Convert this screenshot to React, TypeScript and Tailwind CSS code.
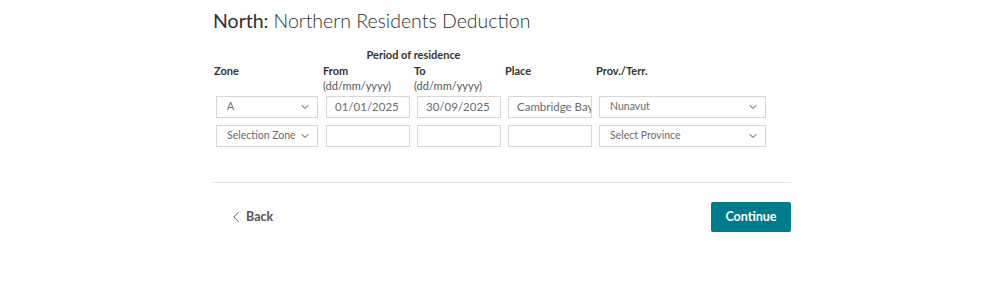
import { ChevronDown, ChevronLeft } from "lucide-react";

function Select({ value, className }: { value: string; className: string }) {
  return (
    <div
      className={`flex items-center justify-between gap-[3px] h-[22px] border border-[#d6d6d6] bg-white pl-[10px] pr-[6px] text-[10.5px] text-[#6b6b6b] ${className}`}
    >
      <span className="whitespace-nowrap">{value}</span>
      <ChevronDown size={12} strokeWidth={2} className="text-[#444] shrink-0" />
    </div>
  );
}

function Field({ value, className }: { value?: string; className: string }) {
  return (
    <div
      className={`flex items-center h-[22px] border border-[#d6d6d6] bg-white pl-[8px] pr-[4px] text-[11.5px] text-[#6b6b6b] overflow-hidden whitespace-nowrap ${className}`}
    >
      {value}
    </div>
  );
}

export default function App() {
  return (
    <div className="w-[999px] h-[299px] bg-white font-['Lato',sans-serif] text-[#333]">
      <div className="ml-[213px] w-[578px] pt-[8px]">
        <h1 className="text-[19.5px] leading-[26px] text-[#2f2f2f]">
          <span className="font-normal">North:</span> <span className="font-light">Northern Residents Deduction</span>
        </h1>

        <div className="mt-[14px] grid grid-cols-[110px_91px_91px_91px_170px] text-[11px]">
          <div />
          <div className="col-span-2 text-center font-bold leading-[14px] pr-[1px]">Period of residence</div>
          <div />
          <div />

          <div className="pl-[1px] font-bold leading-[15px] pt-[1px]">Zone</div>
          <div className="font-bold leading-[15px] pt-[1px]">
            From
            <div className="font-normal text-[#555] leading-[15px]">(dd/mm/yyyy)</div>
          </div>
          <div className="font-bold leading-[15px] pt-[1px]">
            To
            <div className="font-normal text-[#555] leading-[15px]">(dd/mm/yyyy)</div>
          </div>
          <div className="font-bold leading-[15px] pt-[1px]">Place</div>
          <div className="font-bold leading-[15px] pt-[1px]">Prov./Terr.</div>

          <div className="pt-[3px] pl-[3px]"><Select value="A" className="w-[102px]" /></div>
          <div className="pt-[3px] pl-[3px]"><Field value="01/01/2025" className="w-[84px]" /></div>
          <div className="pt-[3px] pl-[3px]"><Field value="30/09/2025" className="w-[84px]" /></div>
          <div className="pt-[3px] pl-[3px]"><Field value="Cambridge Bay" className="w-[84px]" /></div>
          <div className="pt-[3px] pl-[3px]"><Select value="Nunavut" className="w-[167px]" /></div>

          <div className="pt-[7px] pl-[3px]"><Select value="Selection Zone" className="w-[102px]" /></div>
          <div className="pt-[7px] pl-[3px]"><Field className="w-[84px]" /></div>
          <div className="pt-[7px] pl-[3px]"><Field className="w-[84px]" /></div>
          <div className="pt-[7px] pl-[3px]"><Field className="w-[84px]" /></div>
          <div className="pt-[7px] pl-[3px]"><Select value="Select Province" className="w-[167px]" /></div>
        </div>

        <div className="mt-[35px] border-t border-[#e3e3e3]" />

        <div className="mt-[19px] flex items-center justify-between">
          <button className="ml-[14px] flex items-center gap-[1px] text-[12.5px] font-bold text-[#555]">
            <ChevronLeft size={18} strokeWidth={1.3} />
            Back
          </button>
          <button className="h-[30px] w-[80px] rounded-[2px] bg-[#007b8a] text-[12.5px] font-bold text-white">
            Continue
          </button>
        </div>
      </div>
    </div>
  );
}
